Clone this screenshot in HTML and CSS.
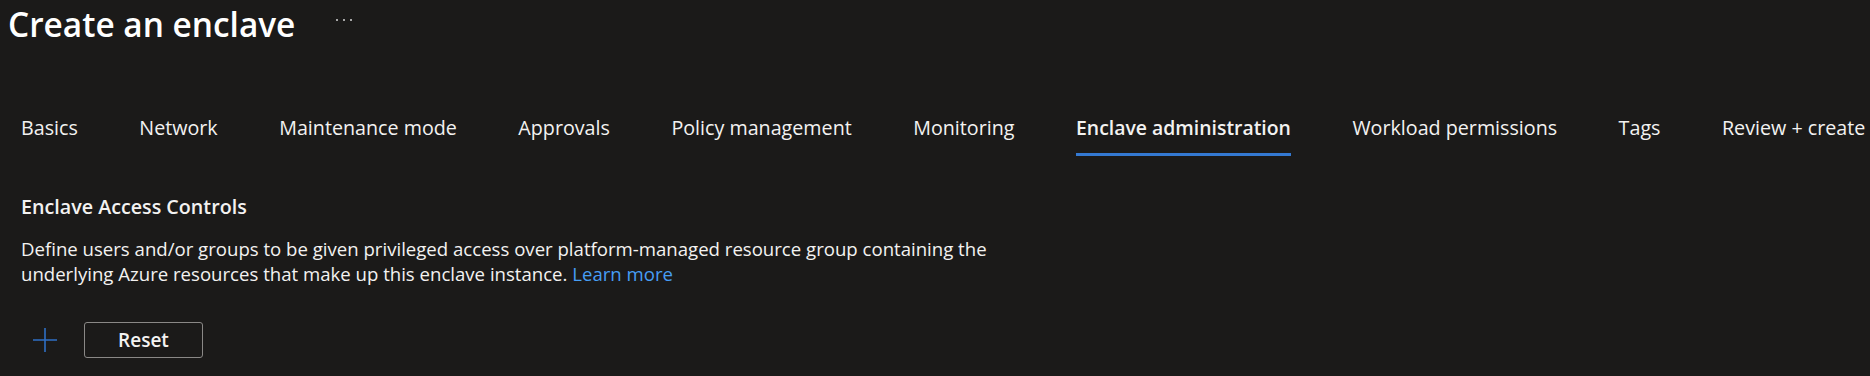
FILE: index.html
```html
<!DOCTYPE html>
<html lang="en">
<head>
    <meta charset="UTF-8">
    <meta name="viewport" content="width=device-width, initial-scale=1.0">
    <title>Create an enclave</title>
    <link rel="stylesheet" href="styles.css">
</head>
<body>

    <!-- Cabeçalho -->
    <div class="page-header">
        <h1>Create an enclave</h1>
        <button class="more-button" title="More actions">
            <svg width="20" height="4" viewBox="0 0 20 4">
                <circle cx="2" cy="2" r="1" fill="#d6d6d6"></circle>
                <circle cx="9" cy="2" r="1" fill="#d6d6d6"></circle>
                <circle cx="16" cy="2" r="1" fill="#d6d6d6"></circle>
            </svg>
        </button>
    </div>

    <!-- Abas do assistente -->
    <nav class="tabs">
        <a href="#">Basics</a>
        <a href="#">Network</a>
        <a href="#">Maintenance mode</a>
        <a href="#">Approvals</a>
        <a href="#">Policy management</a>
        <a href="#">Monitoring</a>
        <a href="#" class="active">Enclave administration</a>
        <a href="#">Workload permissions</a>
        <a href="#">Tags</a>
        <a href="#">Review + create</a>
    </nav>

    <!-- Conteúdo da aba -->
    <div class="section">
        <h2>Enclave Access Controls</h2>
        <p>
            Define users and/or groups to be given privileged access over platform-managed resource group containing the
            underlying Azure resources that make up this enclave instance. <a href="#">Learn more</a>
        </p>

        <div class="actions">
            <button class="add-button" title="Add">
                <svg width="24" height="24" viewBox="0 0 24 24">
                    <path d="M12 0v24M0 12h24" stroke="#2f6fc4" stroke-width="1.6" fill="none"></path>
                </svg>
            </button>
            <button class="reset-button">Reset</button>
        </div>
    </div>

</body>
</html>
```

FILE: styles.css
```css
* {
    box-sizing: border-box;
    margin: 0;
    padding: 0;
}

body {
    font-family: "Open Sans", Arial, sans-serif;
    background-color: #1b1a19;
    color: #f3f2f1;
}

/* Cabeçalho */
.page-header {
    display: flex;
    align-items: center;
    padding: 4px 0 0 8px;
}

.page-header h1 {
    font-size: 33.4px;
    font-weight: 600;
    line-height: 40px;
    color: #ffffff;
}

.more-button {
    background: none;
    border: none;
    margin-left: 40px;
    margin-top: -8px;
    display: flex;
    cursor: pointer;
}

/* Abas */
.tabs {
    display: flex;
    gap: 61.5px;
    padding-left: 21px;
    margin-top: 71px;
}

.tabs a {
    color: #f3f2f1;
    text-decoration: none;
    font-size: 19.7px;
    line-height: 26px;
    padding-bottom: 12px;
    border-bottom: 3px solid transparent;
    white-space: nowrap;
}

.tabs a.active {
    font-weight: 600;
    font-size: 19.4px;
    border-bottom-color: #3479d2;
}

/* Seção */
.section {
    padding-left: 21px;
    margin-top: 38px;
}

.section h2 {
    font-size: 19.7px;
    font-weight: 600;
    line-height: 26px;
}

.section p {
    margin-top: 16px;
    font-size: 18.6px;
    line-height: 25px;
    max-width: 1000px;
}

.section p a {
    color: #479ef5;
    text-decoration: none;
}

.actions {
    display: flex;
    align-items: center;
    margin-top: 36px;
}

.add-button {
    background: none;
    border: none;
    width: 48px;
    height: 36px;
    display: flex;
    align-items: center;
    justify-content: center;
    cursor: pointer;
}

.reset-button {
    margin-left: 15px;
    width: 119px;
    height: 36px;
    background: none;
    border: 1px solid #8a8886;
    border-radius: 3px;
    color: #f3f2f1;
    font-family: inherit;
    font-size: 19px;
    font-weight: 600;
    cursor: pointer;
}
```
